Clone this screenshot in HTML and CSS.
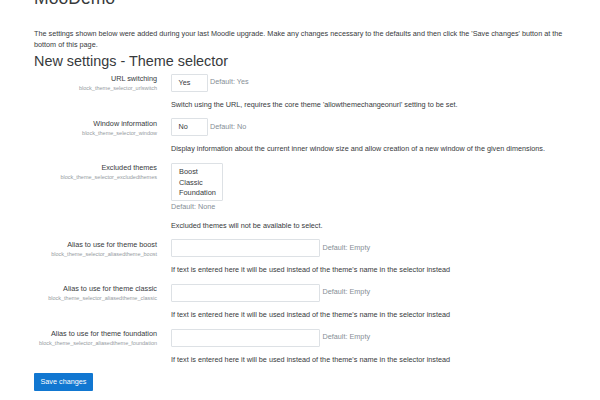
FILE: index.html
```html
<!DOCTYPE html>
<html lang="en">
<head>
    <meta charset="UTF-8">
    <title>MooDemo: New settings</title>
    <link rel="stylesheet" href="styles.css">
</head>
<body>
    <div class="page">
        <h1 class="site-name">MooDemo</h1>
        <p class="intro">The settings shown below were added during your last Moodle upgrade. Make any changes necessary to the defaults and then click the 'Save changes' button at the bottom of this page.</p>
        <h2>New settings - Theme selector</h2>

        <form class="settings">
            <div class="setting">
                <div class="label-cell">
                    <label>URL switching</label>
                    <span class="shortname">block_theme_selector_urlswitch</span>
                </div>
                <div class="control-cell">
                    <div class="control-line">
                        <div class="select">Yes</div>
                        <span class="default">Default: Yes</span>
                    </div>
                    <p class="description">Switch using the URL, requires the core theme 'allowthemechangeonurl' setting to be set.</p>
                </div>
            </div>

            <div class="setting">
                <div class="label-cell">
                    <label>Window information</label>
                    <span class="shortname">block_theme_selector_window</span>
                </div>
                <div class="control-cell">
                    <div class="control-line">
                        <div class="select">No</div>
                        <span class="default">Default: No</span>
                    </div>
                    <p class="description">Display information about the current inner window size and allow creation of a new window of the given dimensions.</p>
                </div>
            </div>

            <div class="setting">
                <div class="label-cell">
                    <label>Excluded themes</label>
                    <span class="shortname">block_theme_selector_excludedthemes</span>
                </div>
                <div class="control-cell">
                    <div class="multiselect">
                        <div>Boost</div>
                        <div>Classic</div>
                        <div>Foundation</div>
                    </div>
                    <div class="default below">Default: None</div>
                    <p class="description">Excluded themes will not be available to select.</p>
                </div>
            </div>

            <div class="setting">
                <div class="label-cell">
                    <label>Alias to use for theme boost</label>
                    <span class="shortname">block_theme_selector_aliasedtheme_boost</span>
                </div>
                <div class="control-cell">
                    <div class="control-line">
                        <div class="text-input"></div>
                        <span class="default">Default: Empty</span>
                    </div>
                    <p class="description">If text is entered here it will be used instead of the theme's name in the selector instead</p>
                </div>
            </div>

            <div class="setting">
                <div class="label-cell">
                    <label>Alias to use for theme classic</label>
                    <span class="shortname">block_theme_selector_aliasedtheme_classic</span>
                </div>
                <div class="control-cell">
                    <div class="control-line">
                        <div class="text-input"></div>
                        <span class="default">Default: Empty</span>
                    </div>
                    <p class="description">If text is entered here it will be used instead of the theme's name in the selector instead</p>
                </div>
            </div>

            <div class="setting">
                <div class="label-cell">
                    <label>Alias to use for theme foundation</label>
                    <span class="shortname">block_theme_selector_aliasedtheme_foundation</span>
                </div>
                <div class="control-cell">
                    <div class="control-line">
                        <div class="text-input"></div>
                        <span class="default">Default: Empty</span>
                    </div>
                    <p class="description">If text is entered here it will be used instead of the theme's name in the selector instead</p>
                </div>
            </div>

            <div class="save-button">Save changes</div>
        </form>
    </div>
</body>
</html>
```

FILE: styles.css
```css
body {
    margin: 0;
    font-family: "Liberation Sans", Arial, sans-serif;
    font-size: 7.25px;
    line-height: 1.5;
    color: #373a3c;
    background: #fff;
}
.page {
    padding: 0 34px;
}
.site-name {
    margin: -12.5px 0 0;
    font-size: 17.6px;
    font-weight: normal;
    line-height: 1.2;
}
.intro {
    margin: 20.3px 0 0;
}
h2 {
    margin: 2px 0 3.6px;
    font-size: 14.4px;
    font-weight: normal;
    line-height: 1.2;
}
.setting {
    display: grid;
    grid-template-columns: 123px 1fr;
    column-gap: 14px;
}
.label-cell {
    text-align: right;
    display: flex;
    flex-direction: column;
    padding-top: 0.6px;
}
.shortname {
    font-size: 5.5px;
    line-height: 1.3;
    color: #959ba1;
}
.control-line {
    display: flex;
    align-items: center;
}
.select {
    width: 28px;
    height: 16px;
    line-height: 16px;
    padding-left: 6.5px;
    border: 1px solid #dde1e5;
    border-radius: 1px;
}
.text-input {
    width: 147px;
    height: 16px;
    border: 1px solid #dde1e5;
    border-radius: 1px;
}
.default {
    margin-left: 2.5px;
    color: #868e96;
}
.default.below {
    margin: 0.8px 0 0;
}
.multiselect {
    width: 43px;
    height: 30px;
    padding: 3.5px 0 2.5px 7px;
    border: 1px solid #dde1e5;
    border-radius: 1px;
    line-height: 10.5px;
    font-size: 7.4px;
}
.description {
    margin: 8px 0 7.8px;
}
.save-button {
    display: inline-block;
    padding: 0 6.5px;
    height: 18px;
    line-height: 18px;
    background: #1177d1;
    color: #fff;
    border-radius: 1px;
}
```
